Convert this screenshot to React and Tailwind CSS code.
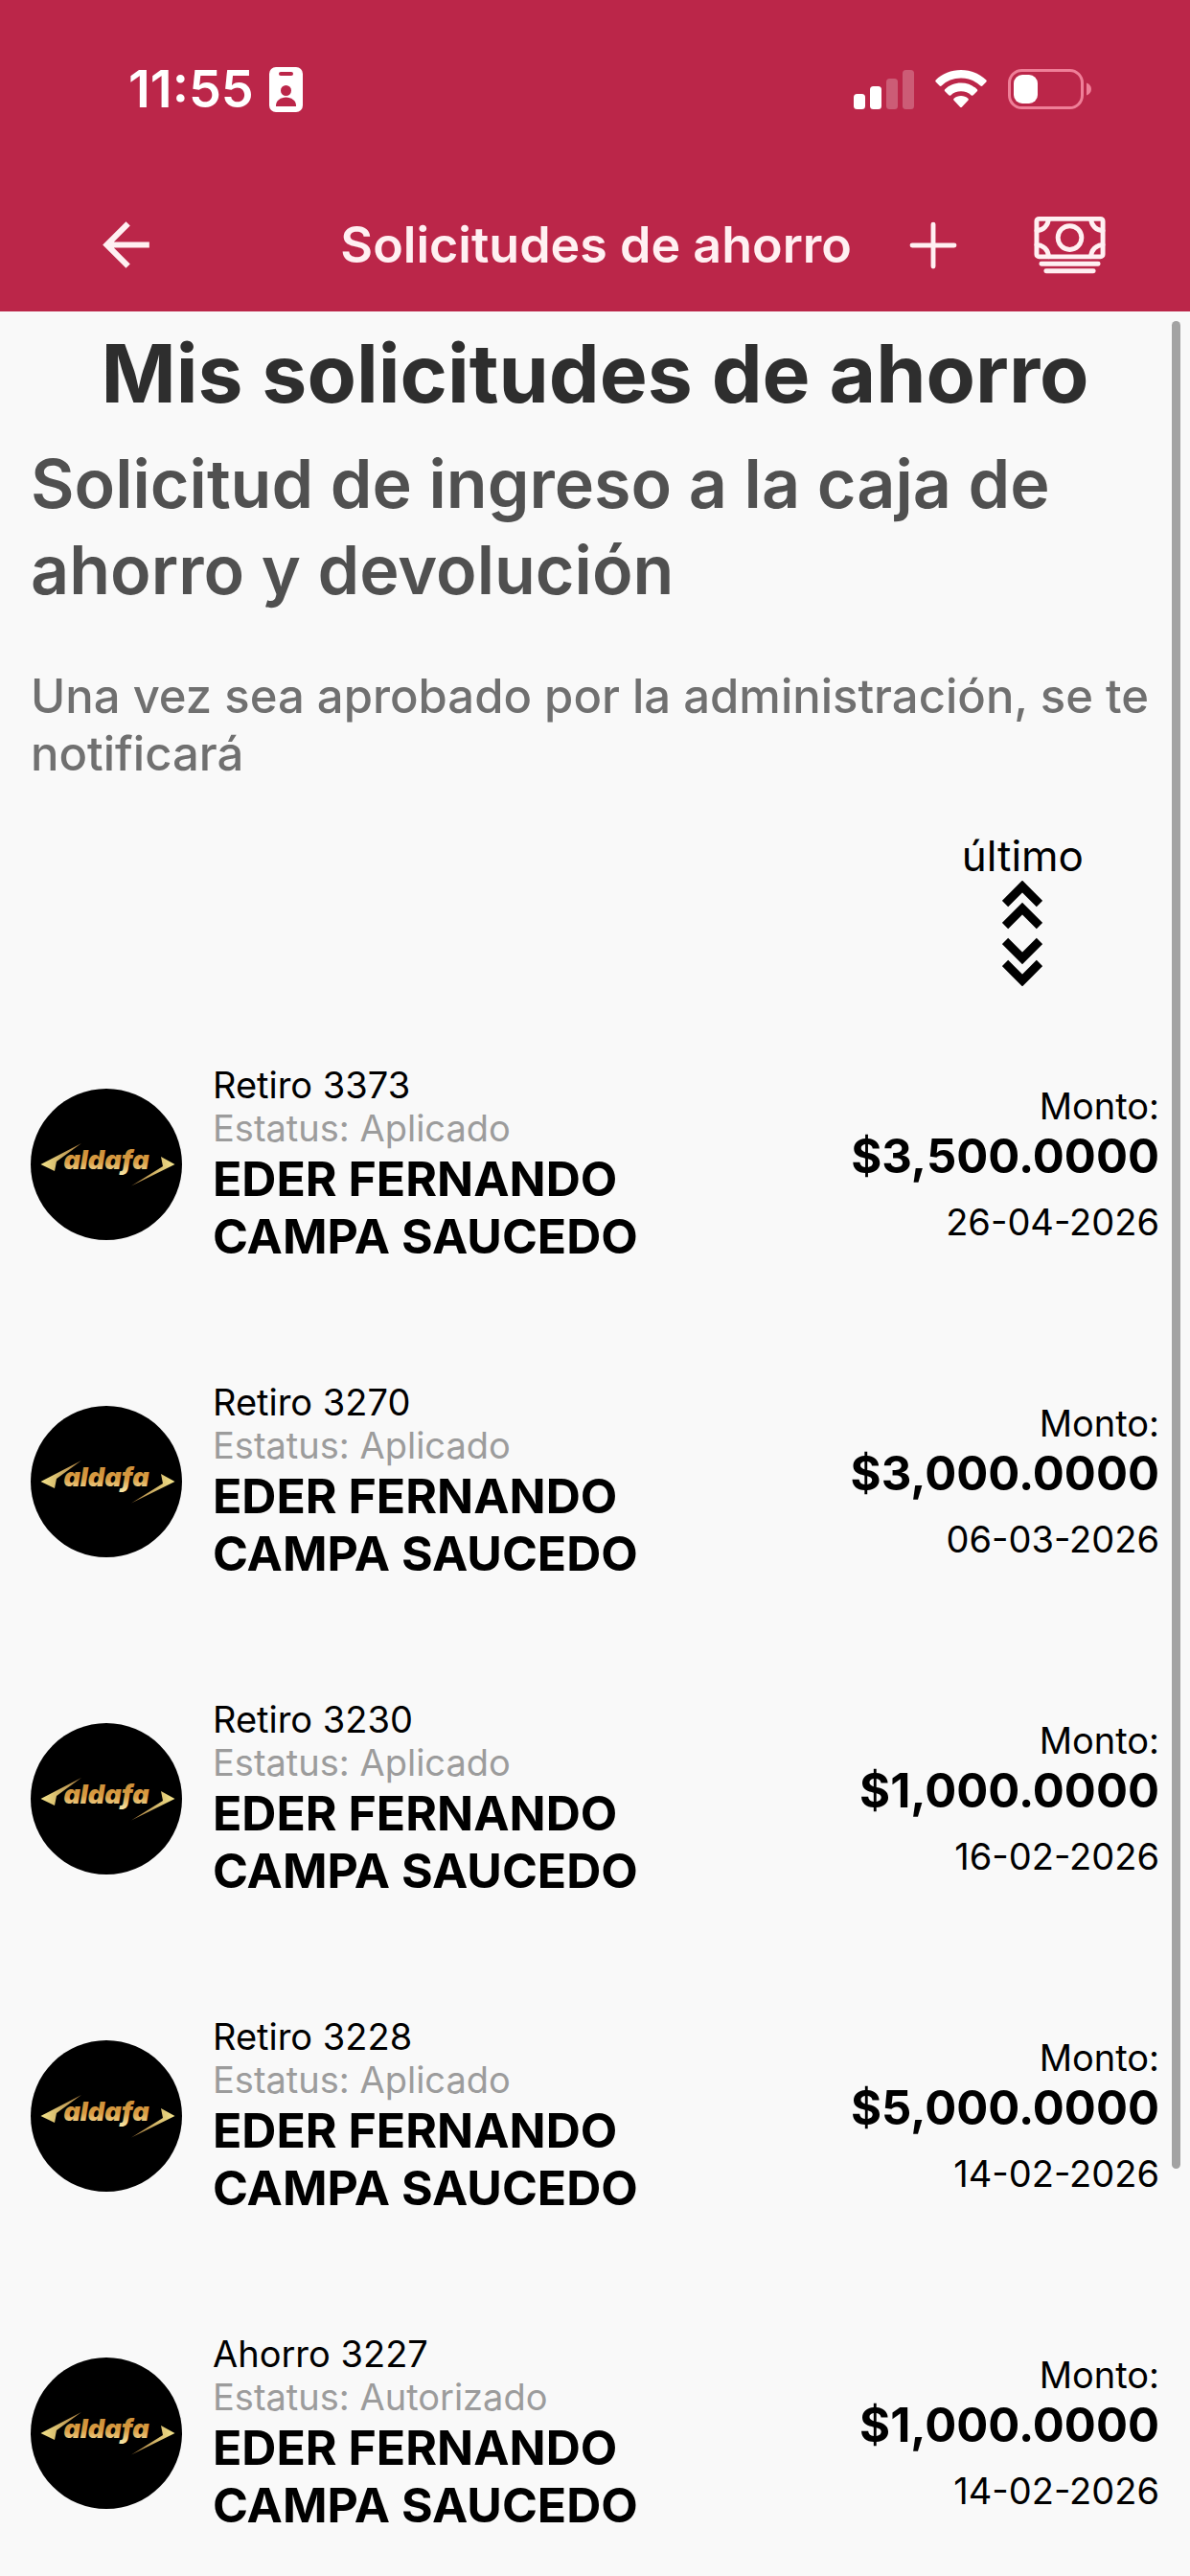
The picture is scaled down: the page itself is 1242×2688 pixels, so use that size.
import { IoAddOutline, IoCashOutline } from 'react-icons/io5'
import { MdArrowBack } from 'react-icons/md'

const solicitudes = [
    { id: 3373, tipo: 'Retiro', estatus: 'Aplicado', monto: '$3,500.0000', fecha: '26-04-2026' },
    { id: 3270, tipo: 'Retiro', estatus: 'Aplicado', monto: '$3,000.0000', fecha: '06-03-2026' },
    { id: 3230, tipo: 'Retiro', estatus: 'Aplicado', monto: '$1,000.0000', fecha: '16-02-2026' },
    { id: 3228, tipo: 'Retiro', estatus: 'Aplicado', monto: '$5,000.0000', fecha: '14-02-2026' },
    { id: 3227, tipo: 'Ahorro', estatus: 'Autorizado', monto: '$1,000.0000', fecha: '14-02-2026' },
]

function StatusBar() {
    return (
        <div className="flex h-[186px] items-center justify-between pl-[134px] pr-[102px] text-white">
            <div className="flex items-center gap-4">
                <span className="text-[54px] font-semibold leading-none">11:55</span>
                <svg width="35" height="47" viewBox="0 0 35 47">
                    <rect width="35" height="47" rx="7" fill="#fff" />
                    <rect x="10" y="5" width="15" height="4" rx="2" fill="#bb2649" />
                    <circle cx="17.5" cy="24.5" r="5.5" fill="#bb2649" />
                    <path d="M7 41v-1c0-5 5-8.5 10.500-8.500S28 35 28 40v1z" fill="#bb2649" />
                </svg>
            </div>

            <div className="flex items-center gap-[22px]">
                <svg width="63" height="42" viewBox="0 0 63 42" fill="#fff">
                    <rect x="0" y="26" width="12" height="16" rx="3.5" />
                    <rect x="17" y="18" width="12" height="24" rx="3.5" />
                    <rect x="34" y="10" width="12" height="32" rx="3.5" opacity="0.25" />
                    <rect x="51" y="1" width="12" height="41" rx="3.5" opacity="0.25" />
                </svg>
                <svg width="54" height="40" viewBox="0 0 54 40" fill="#fff">
                    <path d="M27 0C16.8 0 7.5 3.9 .7 10.4c-.6.6-.6 1.5 0 2.1l3.9 4c.6.6 1.5.6 2.1 0C12 11.6 19.1 8.6 27 8.600s15 3 20.3 7.9c.6.6 1.5.6 2.1 0l3.9-4c.6-.6.6-1.5 0-2.1C46.5 3.9 37.2 0 27 0z" />
                    <path d="M27 13.6c-6.5 0-12.4 2.5-16.8 6.6-.6.6-.6 1.5 0 2.1l4 4c.6.6 1.5.6 2.1.1 2.8-2.6 6.6-4.1 10.7-4.1s7.9 1.5 10.7 4.1c.6.5 1.5.5 2.1-.1l4-4c.6-.6.6-1.5 0-2.1-4.4-4.1-10.3-6.6-16.8-6.6z" />
                    <path d="M27 27c-2.8 0-5.4 1-7.4 2.7-.6.6-.6 1.5 0 2.1l6.3 6.7c.6.7 1.6.7 2.2 0l6.3-6.7c.6-.6.6-1.5 0-2.1C32.4 28 29.8 27 27 27z" />
                </svg>
                <svg width="88" height="42" viewBox="0 0 88 42">
                    <rect x="1.5" y="1.5" width="76" height="39" rx="13" fill="none" stroke="#ef7f98" strokeWidth="3" />
                    <rect x="6" y="6" width="25" height="30" rx="9" fill="#fff" />
                    <path d="M82 14.5c3 1 5 3.5 5 6.500s-2 5.500-5 6.500z" fill="#ef7f98" />
                </svg>
            </div>
        </div>
    )
}

function NavBar() {
    return (
        <div className="flex h-[139px] items-center justify-between pl-[95px] pr-[86px] text-[#fff0f2]">
            <button type="button" aria-label="Regresar">
                <MdArrowBack size={73} />
            </button>
            <div className="flex items-center">
                <h2 className="mr-[46px] text-[52px] font-semibold leading-none">Solicitudes de ahorro</h2>
                <button type="button" aria-label="Agregar solicitud" className="mr-[64px]">
                    <IoAddOutline size={78} />
                </button>
                <button type="button" aria-label="Caja de ahorro">
                    <IoCashOutline size={79} />
                </button>
            </div>
        </div>
    )
}

function SortIcon() {
    return (
        <svg width="42" height="110" viewBox="0 0 42 110" fill="none" stroke="#000" strokeWidth="9">
            <path d="M3 24L21 6l18 18" />
            <path d="M3 47L21 29l18 18" />
            <path d="M3 63l18 18 18-18" />
            <path d="M3 86l18 18 18-18" />
        </svg>
    )
}

function Avatar() {
    return (
        <svg className="size-[158px] shrink-0" viewBox="0 0 158 158" role="img" aria-label="aldafa">
            <defs>
                <linearGradient id="oro" x1="0" y1="0" x2="0" y2="1">
                    <stop offset="0" stopColor="#c98a35" />
                    <stop offset="0.55" stopColor="#d99c42" />
                    <stop offset="1" stopColor="#fbf0b4" />
                </linearGradient>
                <linearGradient id="ala" x1="0" y1="0" x2="1" y2="0">
                    <stop offset="0" stopColor="#f5e58c" />
                    <stop offset="1" stopColor="#a87b3c" />
                </linearGradient>
                <linearGradient id="ala2" x1="0" y1="0" x2="1" y2="0">
                    <stop offset="0" stopColor="#a87b3c" />
                    <stop offset="1" stopColor="#f5e58c" />
                </linearGradient>
            </defs>
            <circle cx="79" cy="79" r="79" fill="#000" />
            <path d="M10.5 79L53 57 27 76l-2 10z" fill="url(#ala)" />
            <path d="M150.5 79L136 71l2 10-33 20.500z" fill="url(#ala2)" />
            <text
                x="79"
                y="84"
                textAnchor="middle"
                fill="url(#oro)"
                className="font-['Inter'] text-[27px] font-black italic"
            >
                aldafa
            </text>
        </svg>
    )
}

function SolicitudRow({ solicitud }) {
    return (
        <li className="flex items-center gap-8">
            <Avatar />
            <div className="flex-1">
                <p className="text-[38px] leading-[45px]">{solicitud.tipo} {solicitud.id}</p>
                <p className="text-[38px] leading-[45px] text-[#9c9c9c]">Estatus: {solicitud.estatus}</p>
                <p className="max-w-[500px] text-[50px] font-bold leading-[60px]">EDER FERNANDO CAMPA SAUCEDO</p>
            </div>
            <div className="text-right">
                <p className="text-[38px] leading-[45px]">Monto:</p>
                <p className="text-[49px] font-bold leading-[60px]">{solicitud.monto}</p>
                <p className="mt-4 text-[38px] leading-[45px]">{solicitud.fecha}</p>
            </div>
        </li>
    )
}

export default function App() {
    return (
        <div className="min-h-screen bg-[#f9f9f9] font-['Inter',sans-serif] text-black">
            <header className="bg-[#bb2649]">
                <StatusBar />
                <NavBar />
            </header>

            <main className="relative px-8 pb-11 pt-[15px]">
                <h1 className="text-center text-[84px] font-bold leading-[100px] text-[#2e2e2e]">
                    Mis solicitudes de ahorro
                </h1>
                <h2 className="mt-5 text-[70px] font-semibold leading-[90px] text-[#505050]">
                    Solicitud de ingreso a la caja de ahorro y devolución
                </h2>
                <p className="mt-[57px] text-[49px] font-medium leading-[60px] text-[#707070]">
                    Una vez sea aprobado por la administración, se te notificará
                </p>

                {/* Sort control */}
                <div className="mt-[50px] flex justify-end pr-[79px]">
                    <button type="button" className="flex flex-col items-center">
                        <span className="text-[44px] leading-[52px]">último</span>
                        <SortIcon />
                    </button>
                </div>

                <ul className="mt-[81px] flex flex-col gap-[121px]">
                    {solicitudes.map(s => (
                        <SolicitudRow key={s.id} solicitud={s} />
                    ))}
                </ul>

                {/* Scroll indicator */}
                <div className="absolute right-[10px] top-[10px] h-[1928px] w-[9px] rounded-full bg-[#a3a3a3]" />
            </main>
        </div>
    )
}
